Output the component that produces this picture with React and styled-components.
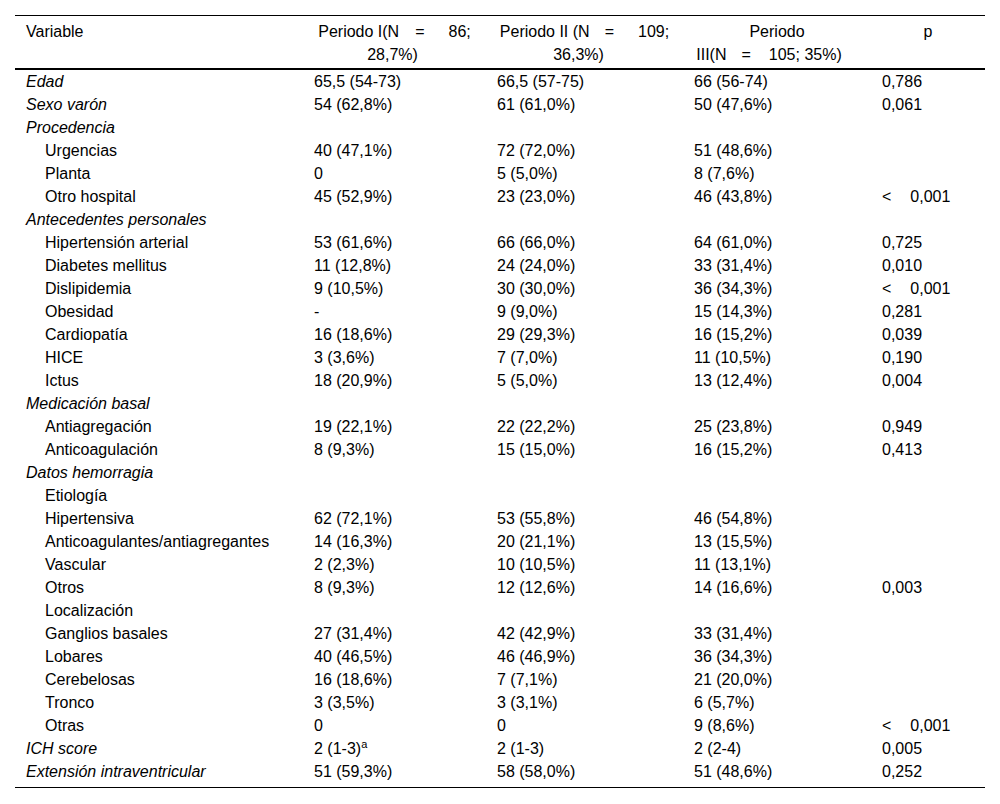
import React from "react";
import styled, { createGlobalStyle } from "styled-components";

const GlobalStyle = createGlobalStyle`
  html, body {
    margin: 0;
    padding: 0;
    background: #fff;
  }
  body {
    font-family: "Liberation Sans", Arial, sans-serif;
    color: #000;
  }
`;

const Wrapper = styled.div`
  padding: 15px;
`;

const Table = styled.table`
  width: 970px;
  table-layout: fixed;
  border-collapse: collapse;
  border-top: 1px solid #000;
  border-bottom: 1px solid #000;
  font-size: 16px;
`;

const Col = styled.col`
  width: ${({ w }) => w}px;
`;

const HeadCell = styled.th`
  font-weight: 400;
  line-height: 23px;
  padding: 4px 11px 2px;
  vertical-align: top;
  text-align: ${({ left }) => (left ? "left" : "center")};
  border-bottom: 2px solid #000;
  white-space: nowrap;
`;

const HeadLine = styled.div`
  text-align: center;
  padding-left: ${({ shift }) => (shift > 0 ? shift : 0)}px;
  padding-right: ${({ shift }) => (shift < 0 ? -shift : 0)}px;
`;

const Gap = styled.span`
  display: inline-block;
  width: ${({ w }) => w}px;
`;

const Row = styled.tr`
  &:last-child td {
    padding-bottom: 4px;
  }
`;

const Cell = styled.td`
  line-height: 23px;
  padding: 0 11px;
  vertical-align: top;
  white-space: nowrap;
`;

const Label = styled(Cell)`
  font-style: ${({ kind }) => (kind === "cat" ? "italic" : "normal")};
  padding-left: ${({ kind }) => (kind === "sub" ? 30 : 11)}px;
`;

const Less = styled.span`
  margin-right: 19px;
`;

const Sup = styled.sup`
  font-size: 11px;
  line-height: 0;
  vertical-align: 6px;
`;

const LT = "lt";

const rows = [
  ["Edad", "cat", "65,5 (54-73)", "66,5 (57-75)", "66 (56-74)", "0,786"],
  ["Sexo varón", "cat", "54 (62,8%)", "61 (61,0%)", "50 (47,6%)", "0,061"],
  ["Procedencia", "cat", "", "", "", ""],
  ["Urgencias", "sub", "40 (47,1%)", "72 (72,0%)", "51 (48,6%)", ""],
  ["Planta", "sub", "0", "5 (5,0%)", "8 (7,6%)", ""],
  ["Otro hospital", "sub", "45 (52,9%)", "23 (23,0%)", "46 (43,8%)", LT],
  ["Antecedentes personales", "cat", "", "", "", ""],
  ["Hipertensión arterial", "sub", "53 (61,6%)", "66 (66,0%)", "64 (61,0%)", "0,725"],
  ["Diabetes mellitus", "sub", "11 (12,8%)", "24 (24,0%)", "33 (31,4%)", "0,010"],
  ["Dislipidemia", "sub", "9 (10,5%)", "30 (30,0%)", "36 (34,3%)", LT],
  ["Obesidad", "sub", "-", "9 (9,0%)", "15 (14,3%)", "0,281"],
  ["Cardiopatía", "sub", "16 (18,6%)", "29 (29,3%)", "16 (15,2%)", "0,039"],
  ["HICE", "sub", "3 (3,6%)", "7 (7,0%)", "11 (10,5%)", "0,190"],
  ["Ictus", "sub", "18 (20,9%)", "5 (5,0%)", "13 (12,4%)", "0,004"],
  ["Medicación basal", "cat", "", "", "", ""],
  ["Antiagregación", "sub", "19 (22,1%)", "22 (22,2%)", "25 (23,8%)", "0,949"],
  ["Anticoagulación", "sub", "8 (9,3%)", "15 (15,0%)", "16 (15,2%)", "0,413"],
  ["Datos hemorragia", "cat", "", "", "", ""],
  ["Etiología", "sub", "", "", "", ""],
  ["Hipertensiva", "sub", "62 (72,1%)", "53 (55,8%)", "46 (54,8%)", ""],
  ["Anticoagulantes/antiagregantes", "sub", "14 (16,3%)", "20 (21,1%)", "13 (15,5%)", ""],
  ["Vascular", "sub", "2 (2,3%)", "10 (10,5%)", "11 (13,1%)", ""],
  ["Otros", "sub", "8 (9,3%)", "12 (12,6%)", "14 (16,6%)", "0,003"],
  ["Localización", "sub", "", "", "", ""],
  ["Ganglios basales", "sub", "27 (31,4%)", "42 (42,9%)", "33 (31,4%)", ""],
  ["Lobares", "sub", "40 (46,5%)", "46 (46,9%)", "36 (34,3%)", ""],
  ["Cerebelosas", "sub", "16 (18,6%)", "7 (7,1%)", "21 (20,0%)", ""],
  ["Tronco", "sub", "3 (3,5%)", "3 (3,1%)", "6 (5,7%)", ""],
  ["Otras", "sub", "0", "0", "9 (8,6%)", LT],
  ["ICH score", "cat", "sup", "2 (1-3)", "2 (2-4)", "0,005"],
  ["Extensión intraventricular", "cat", "51 (59,3%)", "58 (58,0%)", "51 (48,6%)", "0,252"]
];

const Value = ({ v }) => {
  if (v === LT)
    return (
      <>
        <Less>&lt;</Less>0,001
      </>
    );
  if (v === "sup")
    return (
      <>
        2 (1-3)<Sup>a</Sup>
      </>
    );
  return v;
};

const PeriodHead = ({ name, n, pct, gaps, shift }) => (
  <>
    <HeadLine>
      {name}(N<Gap w={gaps[0]} />=<Gap w={gaps[1]} />
      {n};
    </HeadLine>
    <HeadLine shift={shift}>{pct}</HeadLine>
  </>
);

const App = () => (
  <Wrapper>
    <GlobalStyle />
    <Table>
      <colgroup>
        <Col w={288} />
        <Col w={183} />
        <Col w={197} />
        <Col w={188} />
        <Col w={114} />
      </colgroup>
      <thead>
        <tr>
          <HeadCell left>Variable</HeadCell>
          <HeadCell>
            <PeriodHead name="Periodo I" n="86" pct="28,7%)" gaps={[16, 24]} shift={-4} />
          </HeadCell>
          <HeadCell>
            <PeriodHead name="Periodo II " n="109" pct="36,3%)" gaps={[15, 24]} shift={-12} />
          </HeadCell>
          <HeadCell>
            <HeadLine>Periodo</HeadLine>
            <HeadLine shift={-16}>
              III(N<Gap w={15} />=<Gap w={18} />
              105; 35%)
            </HeadLine>
          </HeadCell>
          <HeadCell>p</HeadCell>
        </tr>
      </thead>
      <tbody>
        {rows.map(([label, kind, a, b, c, p]) => (
          <Row key={label}>
            <Label kind={kind}>{label}</Label>
            <Cell>
              <Value v={a} />
            </Cell>
            <Cell>
              <Value v={b} />
            </Cell>
            <Cell>
              <Value v={c} />
            </Cell>
            <Cell>
              <Value v={p} />
            </Cell>
          </Row>
        ))}
      </tbody>
    </Table>
  </Wrapper>
);

export default App;
